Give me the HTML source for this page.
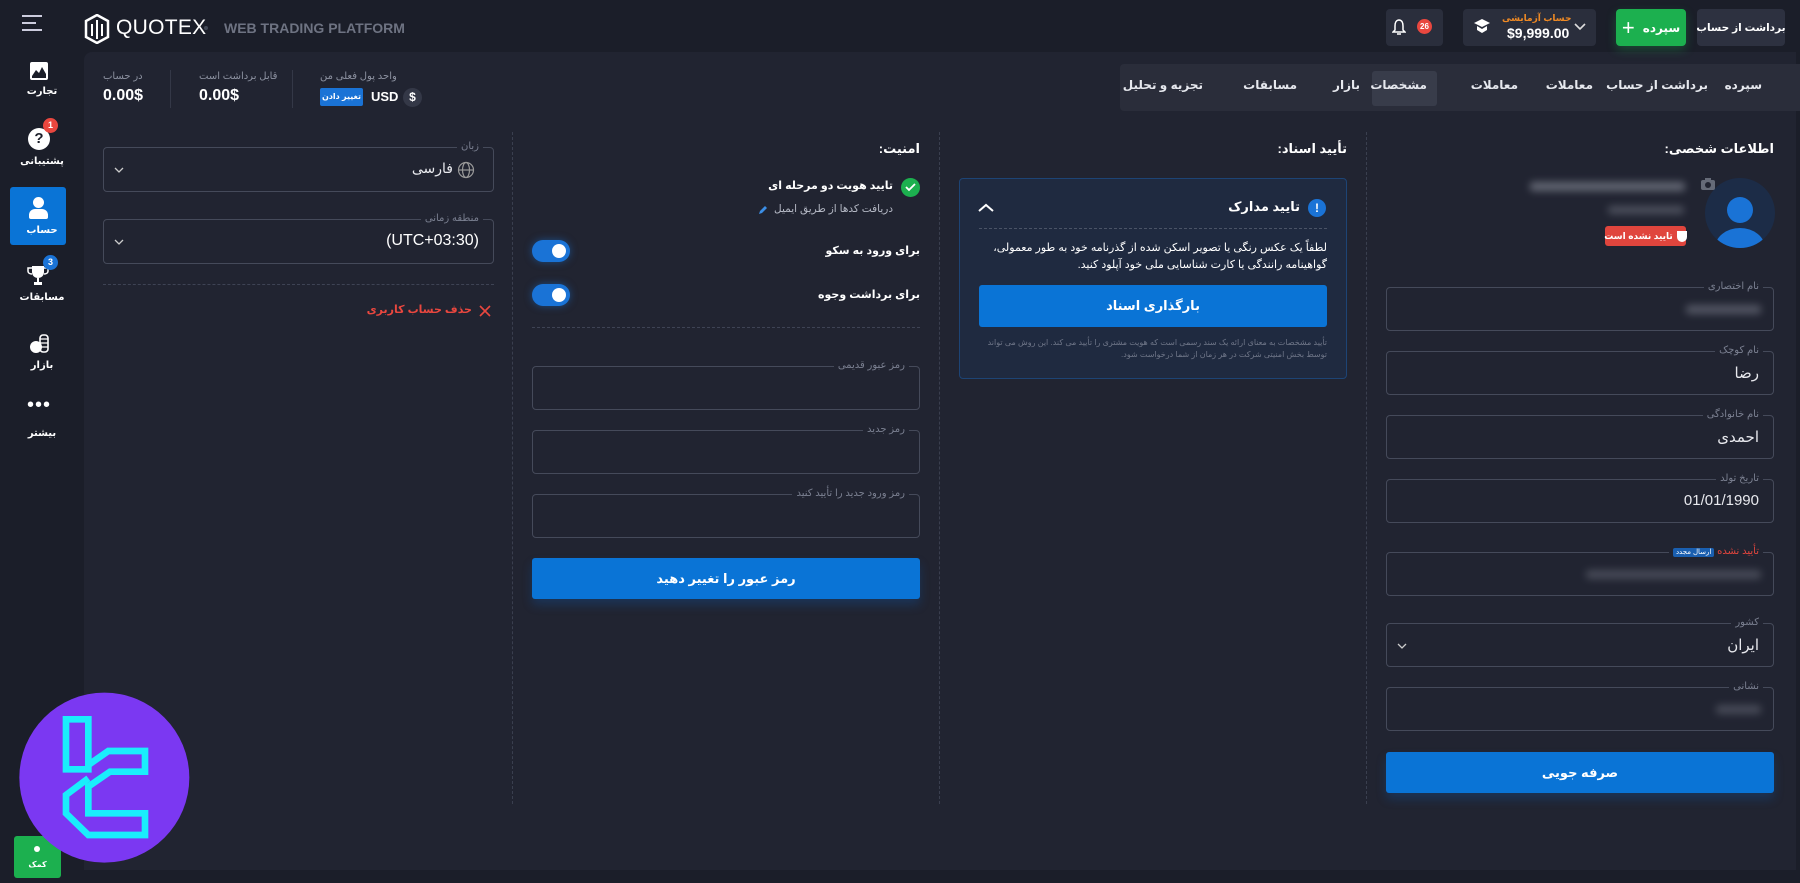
<!DOCTYPE html>
<html><head><meta charset="utf-8">
<style>
*{box-sizing:border-box;margin:0;padding:0}
body{width:1800px;height:883px;background:#1b1e29;font-family:"Liberation Sans","DejaVu Sans",sans-serif;color:#fff;position:relative;overflow:hidden}
.a{position:absolute}
.r{direction:rtl}
.panel{left:84px;top:52px;width:1712px;height:818px;background:#212431;border-radius:8px 0 0 0}
.vd{width:0;border-left:1px dashed #3a3f4f;top:132px;height:672px}
.hd{height:0;border-top:1px dashed #3e4354}
.field{border:1.5px solid #454a5a;border-radius:4px}
.lab{font-size:10px;color:#7b8091;background:#212431;padding:0 4px;top:-7px;right:10px;direction:rtl;white-space:nowrap}
.val{font-size:15px;color:#e8e9ee;direction:rtl}
.btn{background:#0a74d6;border-radius:3px;color:#fff;font-weight:bold;font-size:13px;display:flex;align-items:center;justify-content:center;direction:rtl;box-shadow:0 6px 10px rgba(10,100,200,.25)}
.side{left:0;width:84px;text-align:center;font-size:10px;font-weight:bold;color:#fff}
.tab{top:78px;font-size:12px;font-weight:bold;color:#e6e8ee;direction:rtl;white-space:nowrap}
.blur{background:#8f93a0;filter:blur(4px);opacity:.6;border-radius:3px}
.tog{width:38px;height:22px;border-radius:11px;background:#1a73d6;box-shadow:0 0 8px rgba(26,115,214,.5)}
.tog:after{content:"";position:absolute;right:4px;top:4px;width:14px;height:14px;border-radius:50%;background:#fff}
</style></head><body>
<div class="a panel"></div>

<!-- header -->
<div class="a" style="left:22px;top:15px;width:20px">
 <div style="height:2px;background:#ccd;margin-bottom:5px"></div><div style="height:2px;background:#ccd;width:14px;margin-bottom:5px"></div><div style="height:2px;background:#ccd"></div></div>
<svg class="a" style="left:84px;top:14px" width="26" height="30" viewBox="0 0 26 30"><path d="M13 1 L24 7 V23 L13 29 L2 23 V7 Z" fill="none" stroke="#fff" stroke-width="2.5"/><path d="M8 10V22M13 6V25M18 10V22" stroke="#fff" stroke-width="2"/></svg>
<div class="a" style="left:116px;top:16px;font-size:21px;color:#fff;letter-spacing:.3px">QUOTEX</div>
<div class="a" style="left:204px;top:26px;width:4px;height:4px;border-radius:50%;background:#444a58"></div>
<div class="a" style="left:224px;top:20px;font-size:14px;font-weight:bold;color:#6e7382">WEB TRADING PLATFORM</div>

<div class="a r" style="left:1697px;top:9px;width:88px;height:37px;background:#2d3140;border-radius:4px;font-size:10.5px;font-weight:bold;display:flex;align-items:center;justify-content:center;white-space:nowrap">برداشت از حساب</div>
<div class="a r" style="left:1616px;top:9px;width:70px;height:37px;background:#1cb04f;border-radius:4px;font-size:12px;font-weight:bold;display:flex;align-items:center;justify-content:center;gap:8px;box-shadow:0 4px 10px rgba(28,176,79,.3)"><span>سپرده</span><span style="font-size:22px;font-weight:normal">+</span></div>
<div class="a" style="left:1463px;top:9px;width:133px;height:37px;background:#2a2e3c;border-radius:4px"></div>
<svg class="a" style="left:1473px;top:18px" width="18" height="18" viewBox="0 0 18 18"><path d="M9 1 L17 5 L9 9 L1 5Z" fill="#fff"/><path d="M4 8V12L9 15L14 12V8L9 11Z" fill="#fff"/></svg>
<div class="a r" style="left:1502px;top:13px;font-size:9px;color:#f08a24;font-weight:bold;white-space:nowrap">حساب آزمایشی</div>
<div class="a" style="left:1507px;top:25px;font-size:14px;font-weight:bold">$9,999.00</div>
<svg class="a" style="left:1574px;top:22px" width="12" height="10"><path d="M1 2L6 7L11 2" fill="none" stroke="#ddd" stroke-width="1.6"/></svg>
<div class="a" style="left:1386px;top:9px;width:57px;height:37px;background:#2a2e3c;border-radius:4px"></div>
<svg class="a" style="left:1392px;top:18px" width="14" height="18" viewBox="0 0 14 18"><path d="M7 2C4 2 3 5 3 8V12L1 14H13L11 12V8C11 5 10 2 7 2Z" fill="none" stroke="#fff" stroke-width="1.5"/><path d="M5 16H9" stroke="#fff" stroke-width="1.5"/></svg>
<div class="a" style="left:1417px;top:19px;width:15px;height:15px;border-radius:50%;background:#e9473f;font-size:8px;font-weight:bold;text-align:center;line-height:15px">26</div>

<!-- sidebar -->
<svg class="a" style="left:29px;top:61px" width="20" height="20" viewBox="0 0 20 20"><rect x="1" y="1" width="18" height="18" rx="2" fill="#fff"/><path d="M3 15L7 9L10 12L13 6L17 13V17H3Z" fill="#1b1e29"/></svg>
<div class="a side r" style="top:86px">تجارت</div>
<div class="a" style="left:28px;top:128px;width:22px;height:22px;border-radius:50%;background:#fff;color:#1b1e29;font-weight:bold;font-size:15px;text-align:center;line-height:22px">?</div>
<div class="a" style="left:43px;top:118px;width:15px;height:15px;border-radius:50%;background:#e9473f;font-size:9px;font-weight:bold;text-align:center;line-height:15px">1</div>
<div class="a side r" style="top:156px">پشتیبانی</div>
<div class="a" style="left:10px;top:187px;width:56px;height:58px;background:#0a74d6;border-radius:3px"></div>
<div class="a" style="left:33px;top:197px;width:11px;height:11px;border-radius:50%;background:#fff"></div>
<div class="a" style="left:29px;top:209px;width:19px;height:10px;border-radius:6px 6px 2px 2px;background:#fff"></div>
<div class="a side r" style="top:225px">حساب</div>
<svg class="a" style="left:27px;top:264px" width="22" height="22" viewBox="0 0 22 22"><path d="M5 2H17V8C17 12 14 14 11 14C8 14 5 12 5 8Z" fill="#fff"/><path d="M5 4H1V7C1 9 3 10 5 10M17 4H21V7C21 9 19 10 17 10" fill="none" stroke="#fff" stroke-width="1.5"/><path d="M10 14H12V18H15V21H7V18H10Z" fill="#fff"/></svg>
<div class="a" style="left:43px;top:255px;width:15px;height:15px;border-radius:50%;background:#1a73d6;font-size:9px;font-weight:bold;text-align:center;line-height:15px">3</div>
<div class="a side r" style="top:292px">مسابقات</div>
<svg class="a" style="left:28px;top:333px" width="22" height="22" viewBox="0 0 22 22"><circle cx="8" cy="14" r="6" fill="#fff"/><rect x="12" y="2" width="8" height="17" rx="3" fill="none" stroke="#fff" stroke-width="1.6"/><path d="M12 6H20M12 10H20M12 14H20" stroke="#fff" stroke-width="1.2"/></svg>
<div class="a side r" style="top:360px">بازار</div>
<div class="a" style="left:0;width:78px;text-align:center;top:398px;font-size:20px;letter-spacing:1px;line-height:14px">•••</div>
<div class="a side r" style="top:428px">بیشتر</div>
<div class="a" style="left:14px;top:836px;width:47px;height:42px;background:#1cb04f;border-radius:3px"></div>
<div class="a" style="left:34px;top:846px;width:6px;height:6px;border-radius:50%;background:#fff"></div>
<div class="a side r" style="left:14px;width:47px;top:860px;font-size:8px">کمک</div>

<!-- stats -->
<div class="a r" style="left:103px;top:71px;font-size:10px;color:#8d92a1">در حساب</div>
<div class="a" style="left:103px;top:87px;font-size:16px;font-weight:bold">0.00$</div>
<div class="a" style="left:170px;top:70px;width:1px;height:38px;background:#343847"></div>
<div class="a r" style="left:199px;top:71px;font-size:10px;color:#8d92a1">قابل برداشت است</div>
<div class="a" style="left:199px;top:87px;font-size:16px;font-weight:bold">0.00$</div>
<div class="a" style="left:292px;top:70px;width:1px;height:38px;background:#343847"></div>
<div class="a r" style="left:320px;top:71px;font-size:10px;color:#8d92a1">واحد پول فعلی من</div>
<div class="a r" style="left:320px;top:88px;width:43px;height:18px;background:#1a73d6;border-radius:2px;font-size:8px;text-align:center;line-height:18px;font-weight:bold">تغییر دادن</div>
<div class="a" style="left:371px;top:89px;font-size:13px;font-weight:bold">USD</div>
<div class="a" style="left:403px;top:88px;width:19px;height:19px;border-radius:50%;background:#343847;font-size:12px;font-weight:bold;text-align:center;line-height:19px">$</div>

<!-- tabs -->
<div class="a" style="left:1120px;top:64px;width:680px;height:47px;background:#2a2d3a;border-radius:4px 0 0 4px"></div>
<div class="a" style="left:1372px;top:71px;width:65px;height:35px;background:#383c4a;border-radius:3px"></div>
<div class="a tab" style="right:38px">سپرده</div>
<div class="a tab" style="right:92px">برداشت از حساب</div>
<div class="a tab" style="right:207px">معاملات</div>
<div class="a tab" style="right:282px">معاملات</div>
<div class="a tab" style="right:373px">مشخصات</div>
<div class="a tab" style="right:440px">بازار</div>
<div class="a tab" style="right:503px">مسابقات</div>
<div class="a tab" style="right:597px">تجزیه و تحلیل</div>

<!-- dividers -->
<div class="a vd" style="left:512px"></div>
<div class="a vd" style="left:939px"></div>
<div class="a vd" style="left:1366px"></div>

<!-- col1 -->
<div class="a field" style="left:103px;top:147px;width:391px;height:45px"><div class="a lab">زبان</div>
 <div class="a val" style="right:40px;top:12px;font-size:14px">فارسی</div>
 <svg class="a" style="right:18px;top:13px" width="18" height="18" viewBox="0 0 18 18"><circle cx="9" cy="9" r="7.5" fill="none" stroke="#999" stroke-width="1.2"/><ellipse cx="9" cy="9" rx="3.5" ry="7.5" fill="none" stroke="#999" stroke-width="1.2"/><path d="M1.5 9H16.5" stroke="#999" stroke-width="1.2"/></svg>
 <svg class="a" style="left:10px;top:18px" width="10" height="8"><path d="M1 2L5 6L9 2" fill="none" stroke="#ccc" stroke-width="1.3"/></svg></div>
<div class="a field" style="left:103px;top:219px;width:391px;height:45px"><div class="a lab">منطقه زمانی</div>
 <div class="a" style="right:14px;top:12px;font-size:16px">(UTC+03:30)</div>
 <svg class="a" style="left:10px;top:18px" width="10" height="8"><path d="M1 2L5 6L9 2" fill="none" stroke="#ccc" stroke-width="1.3"/></svg></div>
<div class="a hd" style="left:103px;top:284px;width:391px"></div>
<div class="a r" style="right:1328px;top:303px;font-size:11px;color:#e9473f;font-weight:bold;white-space:nowrap">حذف حساب کاربری</div>
<svg class="a" style="left:479px;top:305px" width="12" height="12"><path d="M1 1L11 11M11 1L1 11" stroke="#e9473f" stroke-width="1.6"/></svg>

<!-- col2 -->
<div class="a r" style="left:870px;top:141px;font-size:13px;font-weight:bold;width:50px">امنیت:</div>
<div class="a" style="left:901px;top:178px;width:19px;height:19px;border-radius:50%;background:#1cb04f"></div>
<svg class="a" style="left:905px;top:183px" width="11" height="9"><path d="M1 4L4 7L10 1" fill="none" stroke="#fff" stroke-width="1.8"/></svg>
<div class="a r" style="left:700px;top:179px;width:193px;font-size:11px;font-weight:bold">تایید هویت دو مرحله ای</div>
<div class="a r" style="left:700px;top:203px;width:193px;font-size:10.5px;color:#b5b9c5">دریافت کدها از طریق ایمیل</div>
<svg class="a" style="left:758px;top:205px" width="10" height="10"><path d="M1 9L2 6L7 1L9 3L4 8Z" fill="#3b8ee6"/></svg>
<div class="a tog" style="left:532px;top:240px"></div>
<div class="a tog" style="left:532px;top:284px"></div>
<div class="a r" style="left:720px;top:244px;width:200px;font-size:11px;font-weight:bold">برای ورود به سکو</div>
<div class="a r" style="left:720px;top:288px;width:200px;font-size:11px;font-weight:bold">برای برداشت وجوه</div>
<div class="a hd" style="left:532px;top:327px;width:388px"></div>
<div class="a field" style="left:532px;top:366px;width:388px;height:44px"><div class="a lab">رمز عبور قدیمی</div></div>
<div class="a field" style="left:532px;top:430px;width:388px;height:44px"><div class="a lab">رمز جدید</div></div>
<div class="a field" style="left:532px;top:494px;width:388px;height:44px"><div class="a lab">رمز ورود جدید را تأیید کنید</div></div>
<div class="a btn" style="left:532px;top:558px;width:388px;height:41px">رمز عبور را تغییر دهید</div>

<!-- col3 -->
<div class="a r" style="left:1200px;top:141px;width:147px;font-size:13px;font-weight:bold">تأیید اسناد:</div>
<div class="a" style="left:959px;top:178px;width:388px;height:201px;background:#1f2a40;border:1.5px solid #1d4475;border-radius:4px"></div>
<div class="a" style="left:1308px;top:199px;width:18px;height:18px;border-radius:50%;background:#1a73d6;font-size:12px;font-weight:bold;text-align:center;line-height:18px">!</div>
<div class="a r" style="left:1150px;top:199px;width:150px;font-size:13px;font-weight:bold">تایید مدارک</div>
<svg class="a" style="left:978px;top:203px" width="16" height="10"><path d="M1 8L8 2L15 8" fill="none" stroke="#fff" stroke-width="2"/></svg>
<div class="a hd" style="left:979px;top:228px;width:348px;border-color:#4a5366"></div>
<div class="a r" style="left:979px;top:240px;width:348px;font-size:11px;line-height:17px">لطفاً یک عکس رنگی یا تصویر اسکن شده از گذرنامه خود به طور معمولی، گواهینامه رانندگی یا کارت شناسایی ملی خود آپلود کنید.</div>
<div class="a btn" style="left:979px;top:285px;width:348px;height:42px;box-shadow:none">بارگذاری اسناد</div>
<div class="a r" style="left:979px;top:337px;width:348px;font-size:8px;color:#6f7688;line-height:12px">تأیید مشخصات به معنای ارائه یک سند رسمی است که هویت مشتری را تأیید می کند. این روش می تواند توسط بخش امنیتی شرکت در هر زمان از شما درخواست شود.</div>

<!-- col4 -->
<div class="a r" style="left:1600px;top:141px;width:174px;font-size:13px;font-weight:bold">اطلاعات شخصی:</div>
<div class="a" style="left:1705px;top:178px;width:70px;height:70px;border-radius:50%;background:#1c2c47;overflow:hidden">
 <div class="a" style="left:22px;top:19px;width:26px;height:26px;border-radius:50%;background:#1a73d6"></div>
 <div class="a" style="left:10px;top:50px;width:50px;height:40px;border-radius:50%;background:#1a73d6"></div></div>
<svg class="a" style="left:1700px;top:177px" width="16" height="14"><rect x="1" y="3" width="14" height="10" rx="2" fill="#666b78"/><rect x="5" y="1" width="6" height="3" fill="#666b78"/><circle cx="8" cy="8" r="3" fill="#212431"/></svg>
<div class="a blur" style="left:1530px;top:182px;width:155px;height:9px"></div>
<div class="a blur" style="left:1608px;top:206px;width:76px;height:8px;opacity:.4"></div>
<div class="a r" style="left:1605px;top:226px;width:81px;height:20px;background:#e0453d;border-radius:3px;font-size:9px;font-weight:bold;display:flex;align-items:center;justify-content:center;gap:4px;white-space:nowrap"><span style="width:10px;height:11px;background:#fff;border-radius:0 0 5px 5px;display:inline-block;flex:none"></span>تایید نشده است</div>

<div class="a field" style="left:1386px;top:287px;width:388px;height:44px"><div class="a lab">نام اختصاری</div><div class="a blur" style="right:12px;top:17px;width:75px;height:9px;opacity:.45"></div></div>
<div class="a field" style="left:1386px;top:351px;width:388px;height:44px"><div class="a lab">نام کوچک</div><div class="a val" style="right:14px;top:12px">رضا</div></div>
<div class="a field" style="left:1386px;top:415px;width:388px;height:44px"><div class="a lab">نام خانوادگی</div><div class="a val" style="right:14px;top:12px">احمدی</div></div>
<div class="a field" style="left:1386px;top:479px;width:388px;height:44px"><div class="a lab">تاریخ تولد</div><div class="a" style="right:14px;top:12px;font-size:15px;color:#e8e9ee">01/01/1990</div></div>
<div class="a field" style="left:1386px;top:552px;width:388px;height:44px"><div class="a lab"><span style="color:#e0453d">تأیید نشده</span> <span style="background:#1a5fb0;color:#fff;padding:1px 3px;border-radius:2px;font-size:7px">ارسال مجدد</span></div><div class="a blur" style="right:12px;top:17px;width:175px;height:9px;opacity:.35"></div></div>
<div class="a field" style="left:1386px;top:623px;width:388px;height:44px"><div class="a lab">کشور</div><div class="a val" style="right:14px;top:12px">ایران</div>
 <svg class="a" style="left:10px;top:18px" width="10" height="8"><path d="M1 2L5 6L9 2" fill="none" stroke="#ccc" stroke-width="1.3"/></svg></div>
<div class="a field" style="left:1386px;top:687px;width:388px;height:44px"><div class="a lab">نشانی</div><div class="a blur" style="right:12px;top:17px;width:45px;height:9px;opacity:.35"></div></div>
<div class="a btn" style="left:1386px;top:752px;width:388px;height:41px">صرفه جویی</div>

<!-- watermark logo -->
<svg class="a" style="left:0;top:680px" width="220" height="203" viewBox="0 0 660 609">
 <circle cx="313" cy="293" r="255" fill="#7b38f2"/>
 <g fill="none" stroke="#1aeefc" stroke-width="20" stroke-linejoin="miter">
  <path d="M198 118H265V268H198Z"/>
  <path d="M265 255L325 213H435V275H330L265 320V400H435V465H265L198 400V345L265 295"/>
 </g>
</svg>
</body></html>
